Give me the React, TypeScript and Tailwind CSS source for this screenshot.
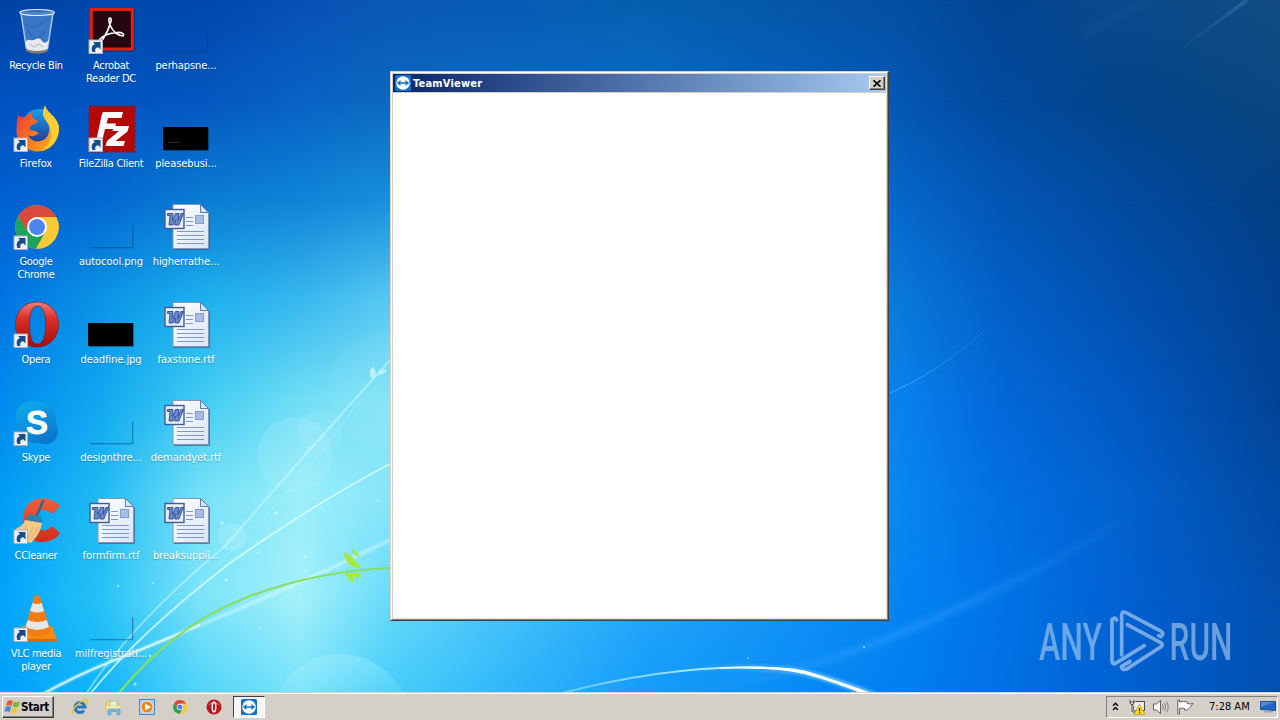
import React from "react";

// sky colours, left to right on horizontal bands 100px apart
const skyStops = [0, 100, 200, 300, 390, 640, 890, 1000, 1130, 1280];
const skyRows = [
  ["#0042a4", "#0046aa", "#0048ac", "#0750b4", "#0a58b8", "#0560b0", "#0450a4", "#034592", "#0a4a8c", "#124c80"],
  ["#0052c0", "#0054c0", "#0556c0", "#0862c4", "#0c68c0", "#0a6cc4", "#0458b4", "#024a9e", "#034488", "#0a4880"],
  ["#0060d0", "#0468d2", "#0a7cd2", "#0e84d8", "#1890dc", "#1080d8", "#0668cc", "#0356b4", "#024a9e", "#034084"],
  ["#0074e2", "#0a94e6", "#1cb0ee", "#38b8ee", "#58c8f2", "#1c9cf0", "#0a7cdc", "#0360c8", "#0250ae", "#024290"],
  ["#008aee", "#10a8f0", "#40ccf2", "#70def5", "#86e4f6", "#30b0f4", "#0884ee", "#0468d8", "#0258c0", "#024496"],
  ["#009cf5", "#20baf4", "#78e2f7", "#9ceffa", "#88e6fa", "#34b8f6", "#0888f4", "#0270e2", "#0260cc", "#024ba4"],
  ["#00a4fa", "#26c2f7", "#7ce4f9", "#a4f1fa", "#66dafa", "#24a8fa", "#0486f4", "#0074e8", "#0260d0", "#0250b0"],
  ["#00a0fa", "#10b4fa", "#4cd2f8", "#74e2fa", "#44ccfa", "#149cfa", "#0080f0", "#0270e4", "#0060d0", "#0250b0"],
];

function Sky() {
  return (
    <g>
      <defs>
        {skyRows.map((row, i) => (
          <React.Fragment key={i}>
            <linearGradient id={`sky${i}`} gradientUnits="userSpaceOnUse" x1="0" x2="1280" y1="0" y2="0">
              {row.map((color, j) => (
                <stop key={j} offset={skyStops[j] / 1280} stopColor={color} />
              ))}
            </linearGradient>
            <linearGradient id={`fade${i}`} gradientUnits="userSpaceOnUse" x1="0" x2="0" y1={(i - 1) * 100} y2={i * 100}>
              <stop offset="0" stopColor="#fff" stopOpacity="0" />
              <stop offset="1" stopColor="#fff" />
            </linearGradient>
            <mask id={`band${i}`} maskUnits="userSpaceOnUse" x="0" y="-100" width="1280" height="820" style={{ maskType: "alpha" }}>
              <rect y="-100" width="1280" height="820" fill={`url(#fade${i})`} />
            </mask>
          </React.Fragment>
        ))}
      </defs>
      {skyRows.map((_, i) => (
        <rect key={i} width="1280" height="720" fill={`url(#sky${i})`} mask={`url(#band${i})`} />
      ))}
    </g>
  );
}

function Wallpaper() {
  return (
    <svg className="absolute inset-0" width="1280" height="720" viewBox="0 0 1280 720" fill="none">
      <defs>
        <linearGradient id="arc" x1="562" x2="875" y1="0" y2="0" gradientUnits="userSpaceOnUse">
          <stop offset="0" stopColor="#7fd8ff" stopOpacity="0.7" />
          <stop offset="0.6" stopColor="#c8f2ff" />
          <stop offset="1" stopColor="#fff" />
        </linearGradient>
        <linearGradient id="arcGlow" x1="690" x2="840" y1="0" y2="0" gradientUnits="userSpaceOnUse">
          <stop offset="0" stopColor="#8cd4ff" stopOpacity="0" />
          <stop offset="1" stopColor="#8cd4ff" />
        </linearGradient>
        <linearGradient id="bubble" x1="0" x2="0" y1="654" y2="694" gradientUnits="userSpaceOnUse">
          <stop offset="0" stopColor="#c8f8ff" stopOpacity="0.28" />
          <stop offset="1" stopColor="#c8f8ff" stopOpacity="0.08" />
        </linearGradient>
        <linearGradient id="ray" x1="640" x2="1150" y1="0" y2="0" gradientUnits="userSpaceOnUse">
          <stop offset="0" stopColor="#3aa4ff" stopOpacity="0" />
          <stop offset="0.5" stopColor="#3aa4ff" stopOpacity="0.5" />
          <stop offset="1" stopColor="#3aa4ff" stopOpacity="0" />
        </linearGradient>
        <linearGradient id="thinRay" x1="890" x2="990" y1="0" y2="0" gradientUnits="userSpaceOnUse">
          <stop offset="0" stopColor="#6cc0ff" stopOpacity="0.6" />
          <stop offset="1" stopColor="#6cc0ff" stopOpacity="0.1" />
        </linearGradient>
        <linearGradient id="cornerRay" x1="1180" x2="1247" y1="0" y2="0" gradientUnits="userSpaceOnUse">
          <stop offset="0" stopColor="#6aa8dc" stopOpacity="0" />
          <stop offset="1" stopColor="#6aa8dc" stopOpacity="0.5" />
        </linearGradient>
        <filter id="soft" x="-20%" y="-20%" width="140%" height="140%">
          <feGaussianBlur stdDeviation="1" />
        </filter>
        <filter id="haze" x="-20%" y="-50%" width="140%" height="200%">
          <feGaussianBlur stdDeviation="3" />
        </filter>
      </defs>
      <Sky />

      {/* bubbles */}
      <g fill="#d5fbfd">
        <circle cx="295" cy="455" r="38" opacity="0.14" />
        <circle cx="320" cy="432" r="22" opacity="0.1" />
        <circle cx="232" cy="537" r="14" opacity="0.2" />
        <circle cx="385" cy="390" r="58" opacity="0.05" />
      </g>
      <circle cx="340" cy="724" r="70" fill="url(#bubble)" />

      {/* light rays */}
      <path d="M640 698Q790 680 900 633Q1050 572 1150 500" stroke="url(#ray)" strokeWidth="7" filter="url(#haze)" />
      <path d="M890 393Q940 372 986 329" stroke="url(#thinRay)" />
      <path d="M1085 35Q1110 18 1150 0" stroke="#4a80b0" strokeOpacity="0.15" strokeWidth="5" filter="url(#haze)" />
      <path d="M1182 48L1247 0" stroke="url(#cornerRay)" strokeWidth="2" filter="url(#soft)" />
      <path d="M43 694Q75 676 110 662T200 625Q300 584 390 540" stroke="#d8fbff" strokeOpacity="0.55" strokeWidth="3.500" filter="url(#soft)" />
      <path d="M43 694Q75 676 110 662T200 625" stroke="#effeff" strokeOpacity="0.7" strokeWidth="2" />
      <path d="M90 694Q140 632 230 563Q320 500 390 464" stroke="#e0fcff" strokeOpacity="0.8" strokeWidth="1.800" />
      <path d="M86 694Q130 625 225 546L312 447Q350 405 390 360" stroke="#e0fcff" strokeOpacity="0.45" strokeWidth="2" />
      <path d="M200 582Q290 500 360 400" stroke="#e0fcff" strokeOpacity="0.25" />
      <path d="M371 378q-3-9 2-11q5 5 1 11zm7-5q4-5 9-3q-3 5-9 5z" fill="#c8f6fd" opacity="0.8" />

      {/* stem and leaves */}
      <path d="M118 694Q175 625 245 598T390 568" stroke="#86df62" strokeWidth="2.200" />
      <path d="M343 552q10 4 13 10q5 3 5 6q-14 1-18-16zM352 548q5 4 8 9q-8-1-8-9zM344 572q6 3 9 1h8q-1 6-4 5l-5-3q3 4 2 8q-6-2-10-11z" fill="#a6e840" />

      {/* bottom arc */}
      <path d="M562 693Q660 668 740 667.500Q780 667 806 673T878 697" stroke="url(#arcGlow)" strokeWidth="7" opacity="0.6" filter="url(#soft)" />
      <path d="M562 693Q660 668 740 667.500Q780 667 806 673" stroke="url(#arc)" strokeWidth="2" />
      <path d="M720 667.500Q785 664.500 808 671.500T880 696L868 696Q835 682 806 674.500T720 668.500Z" fill="#fff" />

      {/* sparkles */}
      <g fill="#e6feff" opacity="0.7">
        <circle cx="226" cy="580" r="1.500" /><circle cx="276" cy="513" r="1.500" /><circle cx="322" cy="508" r="0.800" />
        <circle cx="258" cy="553" r="1.100" /><circle cx="305" cy="557" r="1.200" /><circle cx="306" cy="570" r="1.100" />
        <circle cx="222" cy="523" r="1.500" /><circle cx="118" cy="586" r="1.100" /><circle cx="153" cy="583" r="0.900" />
        <circle cx="135" cy="684" r="1.500" /><circle cx="150" cy="656" r="1.200" /><circle cx="864" cy="647" r="1" />
        <circle cx="748" cy="658" r="0.800" /><circle cx="378" cy="501" r="0.900" /><circle cx="260" cy="628" r="0.900" />
      </g>
    </svg>
  );
}

function ShortcutArrow() {
  return (
    <g>
      <rect x="2" y="34" width="13.500" height="13.500" fill="#eef2f6" stroke="#a8b0b8" />
      <path d="M5.500 46C3.800 42 5 39 8 37.900L6 36H13.500V43.500L11.300 41.300C8.500 41.800 7.500 43.500 8.500 46Z" fill="#174a88" />
    </g>
  );
}

function RecycleBin() {
  return (
    <g>
      <path d="M8 6L14 43Q25 49 36 43L42 6Z" fill="#7fb0e4" fillOpacity="0.45" />
      <path d="M9 7L14.500 43M41 7L35.500 43" stroke="#d5e8f8" strokeOpacity="0.7" strokeWidth="1.500" />
      <path d="M13 18q9 5 14 1t10-6M16 24l7 11l10-9" stroke="#2d63b4" fill="none" strokeWidth="2" opacity="0.6" />
      <path d="M13 36q3-3 5-2t6-1t6 2t7-1l-2 10Q25 48 15 44Z" fill="#e6eaf0" />
      <path d="M17 38l5 3l5-3l4 3" stroke="#aab4c4" fill="none" />
      <path d="M14 43Q25 47 36 43L35.500 45.500Q25 50 14.500 45.500Z" fill="#857c76" />
      <ellipse cx="25" cy="6.500" rx="17.300" ry="3" fill="#5f93d0" fillOpacity="0.5" stroke="#e0eaf2" strokeWidth="1.200" />
    </g>
  );
}

function Acrobat() {
  return (
    <g>
      <rect x="4" y="3" width="44" height="43" fill="#000" opacity="0.25" />
      <rect x="4.300" y="3.500" width="41" height="39.500" fill="#250710" stroke="#ea1c10" strokeWidth="3" />
      <path d="M23 12C21 12 22 17 23.500 20C26 26 32 30 36 30C38 28 35 26 30 26.500C23 27 16 30 13 33C11 36 14 36 16 33C20 27 23 19 24 15C24.500 13 24 12 23 12Z" fill="none" stroke="#fff" strokeWidth="1.600" />
      <ShortcutArrow />
    </g>
  );
}

function Firefox() {
  return (
    <g>
      <circle cx="27" cy="22" r="17" fill="url(#ffBlue)" />
      <path d="M6.500 11C8 13 11 13.500 13.500 13Q16 9 20.500 8.500Q19.500 12 21 14.500L26 17Q23 20.500 19 21.500Q16 24 19 26.500Q23 26 27 29Q22 34 16 31Q20 39 29 37C36 35 38 28 37 22C36 16 30 13 31 8Q31.500 4 33 1.500C35 9 44 12 46.500 21C49 35 39 47.500 26 47.500C13 47.500 4 38 4.500 26Q4 18 6.500 11Z" fill="url(#ffOrange)" />
      <path d="M31 8Q31.500 4 33 1.500C35 9 44 12 46.500 21C49 34 40 45 29 46C38 42 41 33 38 24C36 17 30 14 31 8Z" fill="#ffd83a" opacity="0.85" />
      <ShortcutArrow />
    </g>
  );
}

function FileZilla() {
  return (
    <g>
      <rect x="2.500" y="2.500" width="45" height="45" fill="#b40808" stroke="#a80808" strokeWidth="2" strokeDasharray="2.500 1.500" />
      <path d="M16 8H36L34.500 14H21L19.500 19.500H29L27.500 25H18L14.500 40H8.500L14.500 12Z" fill="#fff" />
      <path d="M27 22H42L40.500 27.500L28.500 37H38L36.500 42H18.500L20 37L32 27H25.500Z" fill="#fff" />
      <ShortcutArrow />
    </g>
  );
}

function ChromeMark() {
  return (
    <g>
      <circle cx="25" cy="25" r="21.700" fill="#fbc934" />
      <path d="M6.200 14.150A21.700 21.700 0 0 0 24 46.700L33.700 30L25 25L16.300 30Z" fill="#1fa25c" />
      <path d="M6.200 14.150L16.300 30L25 15H44.200A21.700 21.700 0 0 0 6.200 14.150Z" fill="#da4a3c" />
      <path d="M25 15H44.200A21.700 21.700 0 0 1 24 46.700L33.700 30A10 10 0 0 0 25 15Z" fill="#fbc934" />
      <circle cx="25" cy="25" r="10" fill="#fff" />
      <circle cx="25" cy="25" r="8" fill="#4a86ee" />
    </g>
  );
}

function OperaMark() {
  return (
    <path
      fillRule="evenodd"
      fill="url(#operaRed)"
      stroke="#8c1010"
      strokeWidth="0.600"
      d="M25 2C38 2 46.500 12 46.500 24.500S38 47 25 47S3.500 37 3.500 24.500S12 2 25 2ZM25.500 6C19.500 6 17.500 14 17.500 25S19.500 44 25.500 44S33.500 36 33.500 25S31.500 6 25.500 6Z"
    />
  );
}

function Skype() {
  return (
    <g>
      <path d="M15 4C20 2 24 4 27 4C38 4 45 13 44 26C48 33 46 44 36 46C31 47 29 45 25 45C12 45 4 36 5 24C2 17 4 8 15 4Z" fill="url(#skypeBlue)" />
      <text x="14" y="35.500" fontFamily="Liberation Sans, sans-serif" fontWeight="bold" fontSize="34" textLength="22" lengthAdjust="spacingAndGlyphs" fill="#fff" stroke="#fff" strokeWidth="0.800">S</text>
      <ShortcutArrow />
    </g>
  );
}

function CCleaner() {
  return (
    <g>
      <path d="M48 10C37 -2 14 0 11 20C9 39 21 47 32 46Q43 45 48 37L40 30Q32 38 26 32C20 25 25 13 33 14Q38 15 40 18Z" fill="url(#ccRed)" />
      <path d="M31 5L24 22" stroke="#1d6f9c" strokeWidth="2.500" strokeLinecap="round" />
      <path d="M18 18Q20 17 22 20H28Q31 22 30 27L13 24Z" fill="#2a84b4" />
      <path d="M13 24L30 27Q29 37 19 47L3 42Q2 34 5 32Q11 30 13 24Z" fill="#f4c98c" />
      <path d="M15 29L9 41M21 31L15 45M26 31L19 43" stroke="#e0a868" fill="none" />
      <ShortcutArrow />
    </g>
  );
}

function Vlc() {
  return (
    <g>
      <path d="M11 32H40L45 46H6Z" fill="#f58a10" />
      <path d="M6 45H45V47.500H6Z" fill="#d86a08" />
      <path d="M22.500 2Q25 0 27.500 2L38.500 36Q36 42 25 42T12.500 36Z" fill="#f47c14" />
      <path d="M20.500 9Q25 11 29.800 9L32 17Q25 20 18 17Z" fill="#e4e6ea" />
      <path d="M15.800 26Q25 30 34.700 26L37 33Q25 39 13.500 33Z" fill="#e4e6ea" />
      <ShortcutArrow />
    </g>
  );
}

function WordDoc() {
  return (
    <g>
      <path d="M11 2.500H38.500L46.500 10.500V46.500H11Z" fill="url(#page)" stroke="#8696b8" />
      <path d="M47.500 11V47.500H12" fill="none" stroke="#3d5a86" strokeOpacity="0.7" />
      <path d="M38.500 2.500V10.500H46.500Z" fill="#d8e6fa" stroke="#5f7dae" />
      <path d="M24 15.500H31M24 19.500H31M24 23.500H31M15 29.500H42M15 33.500H42M15 37.500H42M15 41.500H42" stroke="#7d98d0" />
      <rect x="33.500" y="13.500" width="8" height="8" fill="#a6bce4" stroke="#7f9cd2" />
      <rect x="3" y="7.500" width="19" height="19" fill="#e8eefb" stroke="#3c5c9c" strokeWidth="1.400" />
      <path d="M5.500 11.500H11L10.600 18.500L13.500 11.500H17L16 18.500L19 11.500H21.500L16.800 23H12.800L13.300 18L11 23H7L8 13.500H5.500Z" fill="#6a88c8" stroke="#2c4c94" strokeWidth="0.900" />
    </g>
  );
}

function BlankPicture() {
  return (
    <g stroke="#003c78" fill="none">
      <path d="M3 46.500H46.500V24" strokeOpacity="0.15" />
      <path d="M3 45.500H45.500V23" strokeOpacity="0.45" />
    </g>
  );
}

function BlackPicture() {
  return (
    <g>
      <rect x="2" y="24" width="45" height="23" fill="#001830" opacity="0.4" />
      <rect x="1" y="23" width="45" height="23" fill="#000" />
    </g>
  );
}

const shortcut = (mark: React.ReactNode) => (
  <g>
    {mark}
    <ShortcutArrow />
  </g>
);

const desktopItems: { label: string; icon: React.ReactNode; file?: boolean }[] = [
  { label: "Recycle Bin", icon: <RecycleBin /> },
  { label: "Firefox", icon: <Firefox />, file: true },
  { label: "Google\nChrome", icon: shortcut(<ChromeMark />) },
  { label: "Opera", icon: shortcut(<OperaMark />) },
  { label: "Skype", icon: <Skype /> },
  { label: "CCleaner", icon: <CCleaner /> },
  { label: "VLC media\nplayer", icon: <Vlc /> },
  { label: "Acrobat\nReader DC", icon: <Acrobat /> },
  { label: "FileZilla Client", icon: <FileZilla /> },
  { label: "autocool.png", icon: <BlankPicture />, file: true },
  { label: "deadfine.jpg", icon: <BlackPicture />, file: true },
  { label: "designthre...", icon: <BlankPicture />, file: true },
  { label: "formfirm.rtf", icon: <WordDoc />, file: true },
  { label: "milfregistrati...", icon: <BlankPicture />, file: true },
  { label: "perhapsne...", icon: <BlankPicture />, file: true },
  {
    label: "pleasebusi...",
    icon: (
      <g>
        <BlackPicture />
        <path d="M6 38.500H17" stroke="#2c2c2c" />
      </g>
    ),
    file: true,
  },
  { label: "higherrathe...", icon: <WordDoc />, file: true },
  { label: "faxstone.rtf", icon: <WordDoc />, file: true },
  { label: "demandyet.rtf", icon: <WordDoc />, file: true },
  { label: "breaksuppli...", icon: <WordDoc />, file: true },
];

// gradients shared by the desktop and taskbar icons
function IconDefs() {
  return (
    <svg width="0" height="0" className="absolute">
      <defs>
        <linearGradient id="ffOrange" x1="0" y1="0.2" x2="1" y2="0.8">
          <stop offset="0" stopColor="#f03a3c" />
          <stop offset="0.5" stopColor="#fb7a1c" />
          <stop offset="1" stopColor="#ffb31c" />
        </linearGradient>
        <linearGradient id="ffBlue" x1="0" y1="0" x2="0" y2="1">
          <stop offset="0" stopColor="#18a0e8" />
          <stop offset="1" stopColor="#213a9c" />
        </linearGradient>
        <linearGradient id="operaRed" x1="0" y1="0" x2="0" y2="1">
          <stop offset="0" stopColor="#f08078" />
          <stop offset="0.35" stopColor="#dc3028" />
          <stop offset="1" stopColor="#a80c0c" />
        </linearGradient>
        <linearGradient id="skypeBlue" x1="0" y1="0" x2="0.5" y2="1">
          <stop offset="0" stopColor="#0fb0ee" />
          <stop offset="1" stopColor="#0a78d0" />
        </linearGradient>
        <linearGradient id="ccRed" x1="0" y1="0" x2="0" y2="1">
          <stop offset="0" stopColor="#f0603c" />
          <stop offset="1" stopColor="#d42a1c" />
        </linearGradient>
        <linearGradient id="page" x1="0" y1="0" x2="1" y2="1">
          <stop offset="0" stopColor="#ffffff" />
          <stop offset="1" stopColor="#d8e4fa" />
        </linearGradient>
      </defs>
    </svg>
  );
}

function TeamViewerIcon() {
  return (
    <svg width="16" height="16" viewBox="0 0 16 16" className="shrink-0">
      <rect width="16" height="16" rx="1.500" fill="#1272d2" />
      <circle cx="8" cy="8" r="6.800" fill="#fff" />
      <path d="M1.800 8L5.500 5V7.200H10.500V5L14.200 8L10.500 11V8.800H5.500V11Z" fill="#1272d2" />
    </svg>
  );
}

function TeamViewerWindow() {
  return (
    <div className="absolute left-[390px] top-[71px] flex h-[550px] w-[499px] flex-col border border-t-[#d4d0c8] border-l-[#d4d0c8] border-r-[#404040] border-b-[#404040] bg-white">
      <div className="flex flex-1 flex-col border border-t-white border-l-white border-r-[#808080] border-b-[#808080]">
        <div className="flex flex-1 flex-col border border-t-[#d4d0c8] border-r-[#e4e0dc] border-b-[#e8e4dc] border-l-[#d4d0c8]">
          <div className="flex h-[18px] items-center bg-linear-to-r from-[#0a246a] to-[#a6caf0] pr-px pl-[2px]">
            <TeamViewerIcon />
            <span className="mt-px ml-[2px] flex-1 font-['DejaVu_Sans_Condensed','DejaVu_Sans',sans-serif] text-[11px] leading-[14px] font-bold tracking-[0.2px] text-white">TeamViewer</span>
            <button className="flex h-[14px] w-4 items-center justify-center border border-t-white border-l-white border-r-[#404040] border-b-[#404040] bg-[#d4d0c8] shadow-[inset_-1px_-1px_0_#808080]">
              <svg width="8" height="7" viewBox="0 0 8 7" stroke="#000" strokeWidth="1.700">
                <path d="M0.500 0.300L7.500 6.700M7.500 0.300L0.500 6.700" />
              </svg>
            </button>
          </div>
          <div className="flex-1 border-t border-[#d4d0c8] bg-white" />
        </div>
      </div>
    </div>
  );
}

function AnyRunLogo() {
  return (
    <svg className="absolute left-[1030px] top-[600px] overflow-visible opacity-65" width="220" height="80" viewBox="1030 600 220 80" fill="none">
      <g fontFamily="Roboto, sans-serif" fontWeight="500" fontSize="52" fill="#a4c8ee">
        <text x="1039" y="659.500" textLength="63" lengthAdjust="spacingAndGlyphs">ANY</text>
        <text x="1169.500" y="659.500" textLength="63" lengthAdjust="spacingAndGlyphs">RUN</text>
      </g>
      <g transform="translate(1020 600) scale(0.3333)" stroke="#b4d2f2" strokeWidth="11" strokeLinecap="round" strokeLinejoin="round">
        <path d="M290 60Q286 50 276 58V182Q277 196 290 188L373 137" />
        <path d="M305 165V44Q306 32 318 38L424 94Q434 102 422 110L416 107" />
        <path d="M322 74L422 128Q432 134 422 141L322 206Q306 212 304 200L330 184" />
      </g>
    </svg>
  );
}

function QuickLaunch() {
  return (
    <div className="flex items-center">
      <svg width="18" height="18" viewBox="0 0 18 18" className="ml-[17px]">
        <path d="M13 12.500A5 5 0 1 1 14 9H5.500" fill="none" stroke="#1f78cc" strokeWidth="3" />
        <path d="M2 16C-1 12 10 2 15 1.500C18 1.500 16.500 5 15 7" fill="none" stroke="#f0c030" strokeWidth="1.500" />
      </svg>
      <svg width="17" height="17" viewBox="0 0 17 17" className="ml-[16px]">
        <path d="M1 4L2 2H7L8 4H14V12H1Z" fill="#f4d878" stroke="#cfa848" strokeWidth="0.600" />
        <path d="M5 2H12V7H5Z" fill="#e6f2dc" stroke="#7fb46c" strokeWidth="0.500" />
        <path d="M1 7H15L14 12H2Z" fill="#fbeaa4" />
        <path d="M3 16V10H15V16H12V12.500H6V16Z" fill="#78b8e8" stroke="#4b8cc4" strokeWidth="0.500" />
      </svg>
      <svg width="16" height="16" viewBox="0 0 16 16" className="ml-[17px]">
        <rect x="0.500" y="0.500" width="15" height="15" fill="#a8d0f4" stroke="#4c88c8" />
        <circle cx="8" cy="8" r="6" fill="#f48414" stroke="#fff" strokeWidth="0.700" />
        <path d="M6 4.500V11.500L12 8Z" fill="#fff" />
      </svg>
      <svg width="14" height="14" viewBox="3 3 44 44" className="ml-[18px]">
        <ChromeMark />
      </svg>
      <svg width="16" height="16" viewBox="0 0 16 16" className="ml-[19px]">
        <circle cx="8" cy="8" r="7.500" fill="#b81820" />
        <path d="M2 6Q8 0 14 6Q8 4 2 6Z" fill="#e87078" />
        <ellipse cx="8" cy="8" rx="1.800" ry="4.800" fill="#b81820" stroke="#fff" strokeWidth="1.400" />
      </svg>
    </div>
  );
}

function Tray() {
  return (
    <div className="ml-auto flex h-[22px] w-[172px] items-center border border-t-[#808080] border-l-[#808080] border-r-white border-b-white">
      <svg width="7" height="9" viewBox="0 0 7 9" fill="none" stroke="#000" strokeWidth="1.300" className="mb-[2px] ml-[5px]">
        <path d="M1 3.700L3.500 1.200L6 3.700M1 8L3.500 5.500L6 8" />
      </svg>
      <svg width="16" height="16" viewBox="0 0 16 16" className="ml-[10px]">
        <rect x="4.500" y="2.500" width="11" height="9" fill="#e6e8e8" stroke="#4c4c4c" />
        <path d="M1 0.500V4Q1 5.500 3 5.500Q5 5.500 5 4V0.500M3 6V13H8M1 3H5" fill="none" stroke="#fff" strokeWidth="2.400" />
        <path d="M1 0.500V4Q1 5.500 3 5.500Q5 5.500 5 4V0.500M3 6V13H8M1 3H5" fill="none" stroke="#333" />
        <path d="M10.500 5.500L16 15.500H5Z" fill="#fcd820" stroke="#b89000" strokeWidth="0.600" />
        <path d="M10.500 9V12.300M10.500 13.300V14.500" stroke="#222" strokeWidth="1.200" />
      </svg>
      <svg width="17" height="16" viewBox="0 0 17 16" className="ml-[8px]">
        <path d="M0.500 5H3.500L7.500 1.500V14.500L3.500 11H0.500Z" fill="#fff" stroke="#555" strokeWidth="0.900" />
        <path d="M9.500 5.500Q11 8 9.500 10.500M11.500 4Q14 8 11.500 12M13.500 2.500Q17 8 13.500 13.500" fill="none" stroke="#777" strokeWidth="0.900" />
      </svg>
      <svg width="17" height="16" viewBox="0 0 17 16" className="ml-[7px]">
        <path d="M0.800 1V15H2.500V9.500Q5 8.500 7.500 9.500V11Q11 12 13 8.500L16 4.500Q13 5.500 10.500 4.500V3Q6 1.500 2.500 3V1Z" fill="#fff" stroke="#555" strokeWidth="0.900" />
      </svg>
      <span className="ml-[15px] font-['DejaVu_Sans_Condensed','DejaVu_Sans',sans-serif] text-[11px] leading-[14px] whitespace-nowrap text-black">7:28 AM</span>
      <svg width="16" height="14" viewBox="0 0 16 14" className="mr-px ml-auto">
        <path d="M0.500 1.500H15.500V10.500L0.500 9.500Z" fill="#1f64c4" stroke="#123c80" strokeWidth="0.800" />
        <path d="M1 2H15L1 7Z" fill="#4c8ce0" />
        <path d="M3 10.500L13 11V12.500H5Z" fill="#8ea8cc" />
      </svg>
    </div>
  );
}

function Taskbar() {
  return (
    <footer className="relative flex h-7 flex-col border-t border-[#d4d0c8] bg-[#d4d0c8]">
      <div className="flex flex-1 items-center border-t border-white px-[2px]">
        <button className="flex h-[22px] w-[52px] items-center border border-t-white border-l-white border-r-[#404040] border-b-[#404040] pl-px shadow-[inset_-1px_-1px_0_#808080]">
          <svg width="17" height="16" viewBox="0 0 17 16" className="shrink-0">
            <path d="M3.500 2Q6 0.500 9 2L7.500 7Q5 5.500 2 7Z" fill="#e8562c" />
            <path d="M10 2.500Q12.500 4 16 2.500L14.500 7.500Q11 9 8.500 7.500Z" fill="#7cb83c" />
            <path d="M1.700 8Q4.500 6.500 7.200 8L5.700 13Q3 11.500 0.200 13Z" fill="#3c8ce0" />
            <path d="M8.200 8.500Q11 10 14.200 8.500L12.700 13.500Q9.500 15 6.700 13.500Z" fill="#f8c828" />
          </svg>
          <span className="font-['DejaVu_Sans_Condensed','DejaVu_Sans',sans-serif] text-[11.5px] leading-[14px] font-bold tracking-[-0.3px] text-black">Start</span>
        </button>
        <QuickLaunch />
        <button className="ml-[11px] flex h-[22px] w-8 items-center justify-center border border-t-[#404040] border-l-[#404040] border-r-white border-b-white bg-[#f6f5f3]">
          <TeamViewerIcon />
        </button>
        <Tray />
      </div>
    </footer>
  );
}

export default function App() {
  return (
    <div className="relative flex h-[720px] w-[1280px] flex-col overflow-hidden bg-[#0468cc]">
      <IconDefs />
      <Wallpaper />
      <main className="relative min-h-0 flex-1">
        <div className="grid w-[222px] grid-flow-col grid-cols-[72px_78px_72px] grid-rows-[repeat(7,98px)] pt-[6px]">
          {desktopItems.map((item) => (
            <div key={item.label} className="flex flex-col items-center">
              <svg width="48" height="48" viewBox="0 0 48 48" className="shrink-0 overflow-visible">
                {item.icon}
              </svg>
              <span
                className={`mt-[5px] text-center font-['DejaVu_Sans_Condensed','DejaVu_Sans',sans-serif] text-[11px] leading-[13px] whitespace-pre text-white [text-shadow:0_1px_1px_rgba(0,40,90,0.3)] ${
                  item.file ? "tracking-[-0.05px]" : "tracking-[-0.3px]"
                }`}
              >
                {item.label}
              </span>
            </div>
          ))}
        </div>
        <TeamViewerWindow />
        <AnyRunLogo />
      </main>
      <Taskbar />
    </div>
  );
}
